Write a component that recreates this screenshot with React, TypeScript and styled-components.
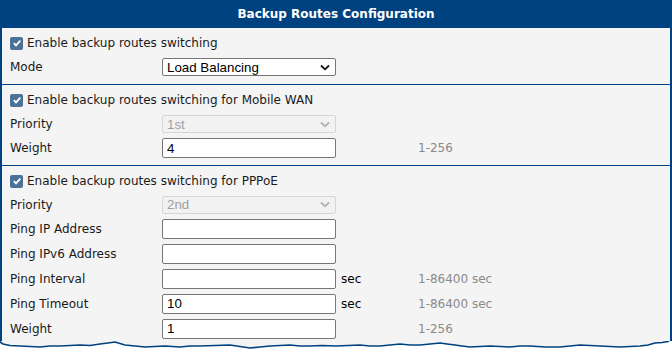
import styled, { createGlobalStyle } from 'styled-components';

const GlobalStyle = createGlobalStyle`
  html, body {
    margin: 0;
    padding: 0;
    background: #ffffff;
  }
`;

const Panel = styled.div`
  width: 672px;
  box-sizing: border-box;
  font-family: 'DejaVu Sans', Verdana, sans-serif;
  font-size: 12px;
  color: #1a1a1a;
`;

const Body = styled.div`
  background: #f4f4f4;
  border-left: 2px solid #00427f;
  border-right: 2px solid #00427f;
`;

const Header = styled.div`
  height: 28px;
  background: #00427f;
  color: #ffffff;
  font-weight: bold;
  font-size: 12px;
  display: flex;
  align-items: center;
  justify-content: center;
`;

const Section = styled.div<{ $last?: boolean }>`
  padding: 3px 0 ${(p) => (p.$last ? '0' : '5px')} 8px;
  border-bottom: ${(p) => (p.$last ? 'none' : '1px solid #00427f')};
`;

const Row = styled.div<{ $h?: number }>`
  display: grid;
  grid-template-columns: 152px 174px 82px auto;
  align-items: center;
  height: ${(p) => p.$h ?? 24}px;
`;

const CheckRow = styled.label`
  display: flex;
  align-items: center;
  gap: 4px;
  height: 24px;
`;

const Box = styled.span`
  width: 13px;
  height: 13px;
  border-radius: 2px;
  background: #4d7298;
  display: flex;
  align-items: center;
  justify-content: center;
`;

const Label = styled.span``;

const Input = styled.input`
  box-sizing: border-box;
  width: 174px;
  height: 20px;
  border: 1px solid #767676;
  border-radius: 2px;
  background: #ffffff;
  padding: 1px 4px;
  font-family: 'Liberation Sans', Arial, sans-serif;
  font-size: 13.33px;
  color: #000;
  outline: none;
`;

const SelectBox = styled.div<{ $disabled?: boolean }>`
  box-sizing: border-box;
  width: 174px;
  height: 18px;
  border: 1px solid ${(p) => (p.$disabled ? '#d6d6d6' : '#767676')};
  border-radius: 2px;
  background: ${(p) => (p.$disabled ? '#f2f2f2' : '#ffffff')};
  color: ${(p) => (p.$disabled ? '#a0a0a0' : '#000000')};
  display: flex;
  align-items: center;
  justify-content: space-between;
  padding: 0 5px 0 4px;
  font-family: 'Liberation Sans', Arial, sans-serif;
  font-size: 13.33px;
`;

const Unit = styled.span`
  padding-left: 5px;
  color: #000;
`;

const Hint = styled.span`
  color: #8a8a8a;
`;

const Torn = styled.svg`
  display: block;
  width: 672px;
  height: 14px;
`;

const Check = () => (
  <Box>
    <svg width="10" height="10" viewBox="0 0 10 10">
      <path d="M1.8 5.2 L4 7.4 L8.3 2.6" fill="none" stroke="#ffffff" strokeWidth="1.8" />
    </svg>
  </Box>
);

const Chevron = ({ color }: { color: string }) => (
  <svg width="10" height="7" viewBox="0 0 10 7">
    <path d="M1 1.5 L5 5.3 L9 1.5" fill="none" stroke={color} strokeWidth="1.8" />
  </svg>
);

const Select = ({ value, disabled }: { value: string; disabled?: boolean }) => (
  <SelectBox $disabled={disabled}>
    <span>{value}</span>
    <Chevron color={disabled ? '#b0b0b0' : '#111'} />
  </SelectBox>
);

const Field = ({
  label,
  value = '',
  unit = '',
  hint = '',
  h,
}: {
  label: string;
  value?: string;
  unit?: string;
  hint?: string;
  h?: number;
}) => (
  <Row $h={h}>
    <Label>{label}</Label>
    <Input defaultValue={value} />
    <Unit>{unit}</Unit>
    <Hint>{hint}</Hint>
  </Row>
);

// ragged bottom edge of the cut-off screenshot
const tornPath =
  'M0 -1 L0 1 L3 3 L10 4.5 L20 5 L30 5.5 L40 6 L50 5 L60 5 L70 4.5 L80 4 L90 4.5 L100 3 L108 2 L115 1 L120 2.5 L125 4 L135 5 L145 6 L155 5.5 L165 5 L172 5.5 L180 6 L190 5 L200 5 L215 4.5 L230 4 L240 5.5 L250 7 L260 6 L270 5 L280 4.5 L290 4 L300 5 L310 5 L322 4.5 L336 5 L348 4.5 L360 4 L370 5 L380 5 L390 4 L400 3 L410 4 L420 4 L430 3 L440 2 L447 3 L455 4 L462 5 L470 6 L480 5.5 L490 5 L500 5.5 L510 6 L520 5 L530 5 L545 6 L560 6 L570 5 L580 4 L590 4.5 L600 5 L610 5.5 L620 6 L630 5.5 L640 5 L648 4 L655 2 L662 1.5 L668 0.5 L670 -1 Z';

export default function App() {
  return (
    <Panel>
      <GlobalStyle />
      <Header>Backup Routes Configuration</Header>
      <Body>
        <Section>
          <CheckRow>
            <Check />
            <Label>Enable backup routes switching</Label>
          </CheckRow>
          <Row>
            <Label>Mode</Label>
            <Select value="Load Balancing" />
          </Row>
        </Section>
        <Section>
          <CheckRow>
            <Check />
            <Label>Enable backup routes switching for Mobile WAN</Label>
          </CheckRow>
          <Row>
            <Label>Priority</Label>
            <Select value="1st" disabled />
          </Row>
          <Field label="Weight" value="4" hint="1-256" />
        </Section>
        <Section $last>
          <CheckRow>
            <Check />
            <Label>Enable backup routes switching for PPPoE</Label>
          </CheckRow>
          <Row $h={23}>
            <Label>Priority</Label>
            <Select value="2nd" disabled />
          </Row>
          <Field label="Ping IP Address" h={25} />
          <Field label="Ping IPv6 Address" h={25} />
          <Field label="Ping Interval" unit="sec" hint="1-86400 sec" h={25} />
          <Field label="Ping Timeout" value="10" unit="sec" hint="1-86400 sec" h={25} />
          <Field label="Weight" value="1" hint="1-256" h={25} />
        </Section>
      </Body>
      <Torn viewBox="0 0 672 14">
        <path d={tornPath} fill="#f4f4f4" stroke="#00427f" strokeWidth="1.6" />
      </Torn>
    </Panel>
  );
}
